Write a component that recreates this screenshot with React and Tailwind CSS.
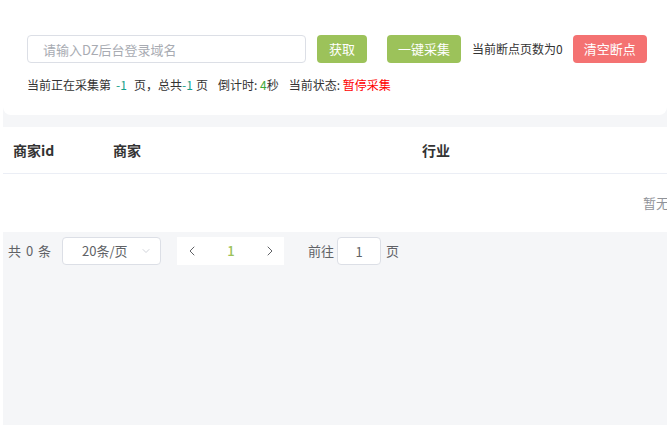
import React from 'react';
import { ChevronLeft, ChevronRight, ChevronDown } from 'lucide-react';

const font = { fontFamily: '"Noto Sans CJK SC", "Noto Sans", sans-serif' };

const columns = [
    { key: 'id', label: '商家id', width: 'w-[100px]' },
    { key: 'name', label: '商家', width: 'w-[309px]' },
    { key: 'industry', label: '行业', width: 'w-[300px]' },
];

const App = () => {
    return (
        <div className="min-h-[425px] bg-white pl-[3px] overflow-hidden" style={font}>
            <div className="min-h-[425px] bg-[#f5f6f8]">
                {/* Top form card */}
                <div className="h-[115px] bg-white rounded-b-lg pt-[35px] pl-6">
                    <div className="flex items-center">
                        <input
                            className="w-[279px] h-7 border border-[#dcdfe6] rounded px-[15px] text-[13px] text-[#606266] placeholder:text-[#a8abb2] outline-none"
                            placeholder="请输入DZ后台登录域名"
                        />
                        <button className="ml-[11px] w-[50px] h-7 rounded bg-[#9cc25a] text-white text-[13px]">获取</button>
                        <button className="ml-5 w-[74px] h-7 rounded bg-[#9cc25a] text-white text-[13px]">一键采集</button>
                        <span className="ml-[11px] text-xs text-[#333]">当前断点页数为0</span>
                        <button className="ml-[10px] w-[74px] h-7 rounded bg-[#f47272] text-white text-[13px]">清空断点</button>
                    </div>
                    <div className="mt-[12px] text-xs text-[#333] leading-5">
                        当前正在采集第<span className="inline-block mx-[5px] w-[13px] text-[#14a08a]">-1</span>页，总共<span className="inline-block w-[14px] text-[#14a08a]">-1</span>页
                        <span className="ml-[10px]">倒计时: <span className="text-[#3aa83a]">4</span>秒</span>
                        <span className="ml-[10px]">当前状态: <span className="text-[#ff0000]">暂停采集</span></span>
                    </div>
                </div>

                {/* Table */}
                <div className="mt-3 bg-white overflow-hidden">
                    <div className="flex h-[47px] items-center border-b border-[#ebeef5] w-[1332px]">
                        {columns.map(col => (
                            <div key={col.key} className={`${col.width} pl-[10px] text-sm font-bold text-[#333]`}>
                                {col.label}
                            </div>
                        ))}
                    </div>
                    <div className="h-[58px] w-[1332px] flex items-center justify-center text-[13px] text-[#909399]">
                        暂无数据
                    </div>
                </div>

                {/* Pagination */}
                <div className="mt-[5px] pl-[5px] flex items-center h-7 text-[13px] text-[#606266]">
                    <span className="tracking-[1px]">共 0 条</span>
                    <div className="ml-[10px] w-[99px] h-7 border border-[#dcdfe6] rounded bg-white flex items-center pl-[19px] pr-[8px]">
                        <span className="flex-1 text-[#606266]">20条/页</span>
                        <ChevronDown className="w-3 h-3 text-[#c0c4cc]" strokeWidth={1.5} />
                    </div>
                    <div className="ml-4 h-7 bg-white flex items-center">
                        <div className="w-[30px] flex justify-center">
                            <ChevronLeft className="w-4 h-4 text-[#606266]" strokeWidth={1.5} />
                        </div>
                        <div className="w-[48px] text-center text-[#9cc25a] font-medium">1</div>
                        <div className="w-[29px] flex justify-center">
                            <ChevronRight className="w-4 h-4 text-[#606266]" strokeWidth={1.5} />
                        </div>
                    </div>
                    <span className="ml-6">前往</span>
                    <input
                        className="ml-[3px] w-[44px] h-7 border border-[#dcdfe6] rounded bg-white text-center text-[13px] text-[#606266] outline-none"
                        defaultValue="1"
                    />
                    <span className="ml-[5px]">页</span>
                </div>
            </div>
        </div>
    );
};

export default App;
